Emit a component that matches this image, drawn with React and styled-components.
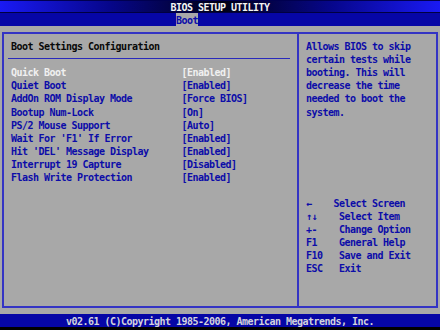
import React from 'react'
import styled, { createGlobalStyle } from 'styled-components'

// the screen is an 80x25 text grid, scaled down from 640x475
const CW = 5.5
const RH = 13.0625
const BLUE = '#0c0ca8'
const LINE = '#3434c4'

const GlobalStyle = createGlobalStyle`
    html, body {
        margin: 0;
        padding: 0;
        background: #000;
    }
`

const Screen = styled.div`
    width: 440px;
    height: 330px;
    overflow: hidden;
    display: grid;
    grid-template-rows: ${RH}px ${RH}px ${RH * 22}px ${RH}px 1fr;
    background: #000;
    font-family: "DejaVu Sans Mono", "Liberation Mono", monospace;
    font-size: 10px;
    font-weight: bold;
    letter-spacing: -0.52px;
    white-space: pre;
`

const TitleBar = styled.header`
    height: ${RH}px;
    line-height: ${RH + 2}px;
    text-align: center;
    color: #f4f4f4;
    background: linear-gradient(90deg, #1a1af4 0%, #06068a 25%, #000014 50%, #06068a 75%, #1a1af4 100%);
    box-shadow: inset 0 1px 0 #000050, inset 0 -1px 0 #000040;
`

const TabBar = styled.nav`
    display: flex;
    padding-left: ${CW * 32}px;
    background: #0606a6;
`

const Tab = styled.div`
    height: ${RH}px;
    line-height: ${RH + 2}px;
    background: #a8a8a8;
    color: ${BLUE};
`

const Main = styled.main`
    background: #a8a8a8;
    padding: 5.875px 2px 5.5px 2px;
    display: flex;
`

const Frame = styled.div`
    flex: 1;
    display: grid;
    grid-template-columns: 295px 1fr;
    border: 2px solid ${LINE};
`

const LeftPane = styled.section`
    border-right: 2px solid ${LINE};
    padding: 5.19px 7px 0 7px;
`

const RightPane = styled.aside`
    padding: 5.19px 0 0 7px;
    color: ${BLUE};
`

const HelpLine = styled.div`
    height: ${RH}px;
    line-height: ${RH + 2}px;
`

const Heading = styled.h1`
    margin: 0;
    font: inherit;
    height: ${RH}px;
    line-height: ${RH + 2}px;
    color: #080808;
`

const Rule = styled.div`
    height: ${RH}px;
    display: flex;
    align-items: center;
    margin-left: -3px;
    &::after {
        content: '';
        flex: 1;
        height: 1px;
        background: #2a2abc;
    }
`

const Setting = styled.div`
    display: grid;
    grid-template-columns: ${CW * 31}px auto;
    height: ${RH}px;
    line-height: ${RH + 2}px;
    color: ${p => (p.$active ? '#f0f0f0' : BLUE)};
`

const Label = styled.span``

const Value = styled.span``

const Keys = styled.div`
    margin-top: ${RH * 6}px;
`

const KeyRow = styled.div`
    display: grid;
    grid-template-columns: ${p => p.$keyCols * CW}px auto;
    height: ${RH}px;
    line-height: ${RH + 2}px;
`

const KeyName = styled.span``

const KeyAction = styled.span``

const Footer = styled.footer`
    height: ${RH}px;
    line-height: ${RH + 2}px;
    text-align: center;
    background: #0606a6;
    color: #d4d4dc;
`

const settings = [
    ['Quick Boot', '[Enabled]'],
    ['Quiet Boot', '[Enabled]'],
    ['AddOn ROM Display Mode', '[Force BIOS]'],
    ['Bootup Num-Lock', '[On]'],
    ['PS/2 Mouse Support', '[Auto]'],
    ["Wait For 'F1' If Error", '[Enabled]'],
    ["Hit 'DEL' Message Display", '[Enabled]'],
    ['Interrupt 19 Capture', '[Disabled]'],
    ['Flash Write Protection', '[Enabled]']
]

const help = [
    'Allows BIOS to skip',
    'certain tests while',
    'booting. This will',
    'decrease the time',
    'needed to boot the',
    'system.'
]

const keys = [
    ['\u2190', 'Select Screen', 5],
    ['\u2191\u2193', 'Select Item', 6],
    ['+-', 'Change Option', 6],
    ['F1', 'General Help', 6],
    ['F10', 'Save and Exit', 6],
    ['ESC', 'Exit', 6]
]

const App = () =>
    (
        <>
            <GlobalStyle />
            <Screen>
                <TitleBar>BIOS SETUP UTILITY</TitleBar>
                <TabBar>
                    <Tab>Boot</Tab>
                </TabBar>
                <Main>
                    <Frame>
                        <LeftPane>
                            <Heading>Boot Settings Configuration</Heading>
                            <Rule />
                            {settings.map(([label, value], i) => (
                                <Setting key={label} $active={i === 0}>
                                    <Label>{label}</Label>
                                    <Value>{value}</Value>
                                </Setting>
                            ))}
                        </LeftPane>
                        <RightPane>
                            {help.map(text => <HelpLine key={text}>{text}</HelpLine>)}
                            <Keys>
                                {keys.map(([k, desc, cols]) => (
                                    <KeyRow key={desc} $keyCols={cols}>
                                        <KeyName>{k}</KeyName>
                                        <KeyAction>{desc}</KeyAction>
                                    </KeyRow>
                                ))}
                            </Keys>
                        </RightPane>
                    </Frame>
                </Main>
                <Footer>v02.61 (C)Copyright 1985-2006, American Megatrends, Inc.</Footer>
            </Screen>
        </>
    )

export default App
